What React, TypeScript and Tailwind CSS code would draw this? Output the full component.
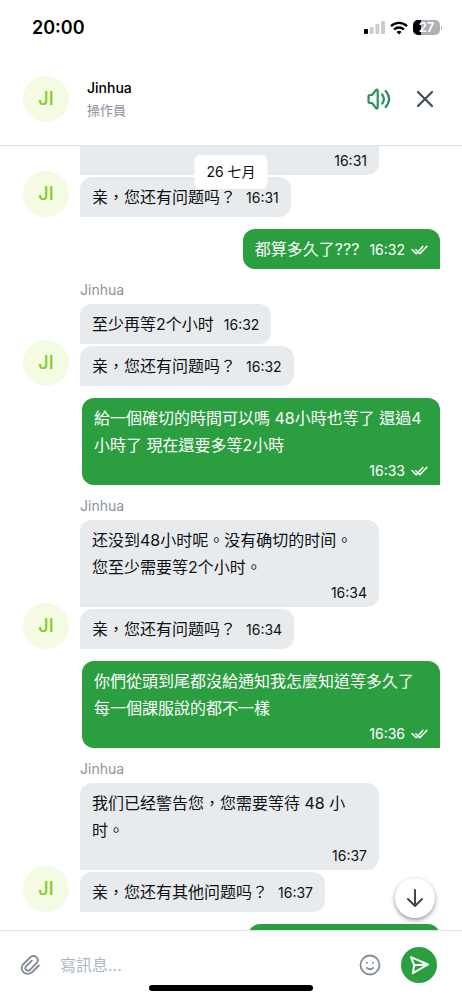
import type { ReactNode } from "react";

type Message = { text: string; time: string; wide?: boolean };

const first: Message[] = [{ text: "亲，您还有问题吗？", time: "16:31" }];

const second: Message[] = [
  { text: "至少再等2个小时", time: "16:32" },
  { text: "亲，您还有问题吗？", time: "16:32" },
];

const third: Message[] = [
  {
    text: "还没到48小时呢。没有确切的时间。\n您至少需要等2个小时。",
    time: "16:34",
    wide: true,
  },
  { text: "亲，您还有问题吗？", time: "16:34" },
];

const fourth: Message[] = [
  { text: "我们已经警告您，您需要等待 48 小时。", time: "16:37", wide: true },
  { text: "亲，您还有其他问题吗？", time: "16:37" },
];

function Avatar() {
  return (
    <div className="flex size-[46px] shrink-0 items-center justify-center rounded-full bg-[#f3fbe3] text-lg font-medium text-[#82cb22]">
      JI
    </div>
  );
}

function Ticks() {
  return (
    <svg
      className="h-[10px] w-[17px]"
      viewBox="0 0 17 10"
      fill="none"
      stroke="currentColor"
      strokeWidth="1.5"
      strokeLinecap="round"
      strokeLinejoin="round"
    >
      <path d="M1 4.500l4.200 4.300 1-1M8.200 5.600l3.600-4.200M4.800 4.800L8.800 8.800 15.900 1.200" />
    </svg>
  );
}

function Bubble({ text, time, wide, mine }: Message & { mine?: boolean }) {
  const color = mine
    ? "bg-[#2b9e40] text-white rounded-bl-xl"
    : "bg-[#e7ebee] text-[#111] rounded-br-xl";
  const layout = wide ? "w-full flex-col pb-[2px]" : "items-center gap-[10px] pb-1.5";

  return (
    <div className={`flex rounded-t-xl px-3 pt-[7px] ${color} ${layout}`}>
      <p className="text-base leading-[27px] whitespace-pre-line">{text}</p>
      <div
        className={`flex shrink-0 items-center gap-1.5 text-sm ${
          wide ? "h-6 self-end" : ""
        }`}
      >
        <time>{time}</time>
        {mine && <Ticks />}
      </div>
    </div>
  );
}

function Incoming({
  name,
  messages,
  children,
}: {
  name?: string;
  messages: Message[];
  children?: ReactNode;
}) {
  return (
    <div className="flex items-end gap-[11px] pr-[83px] pl-[23px]">
      <Avatar />
      <div className="flex min-w-0 flex-1 flex-col items-start gap-0.5">
        {name && (
          <span className="mt-3 mb-[3px] text-sm leading-[18px] text-[#8a949e]">
            {name}
          </span>
        )}
        {children}
        {messages.map((m, i) => (
          <Bubble key={i} {...m} />
        ))}
      </div>
    </div>
  );
}

function Outgoing(props: Message) {
  return (
    <div className="mt-3 flex justify-end pr-[22px] pl-[82px]">
      <Bubble {...props} mine />
    </div>
  );
}

function StatusBar() {
  return (
    <div className="flex h-[54px] items-center justify-between pt-px pr-5 pl-8">
      <span className="text-lg font-semibold text-black">20:00</span>
      <div className="flex items-center gap-[5px]">
        <svg className="h-[13px] w-[21px]" viewBox="0 0 21 13">
          <rect x="0" y="8" width="4" height="5" rx="1" fill="#000" />
          <rect x="5.700" y="6" width="4" height="7" rx="1" fill="#ccc" />
          <rect x="11.400" y="3" width="4" height="10" rx="1" fill="#ccc" />
          <rect x="17" y="0" width="4" height="13" rx="1" fill="#ccc" />
        </svg>
        <svg
          className="h-[14px] w-[18px]"
          viewBox="0 0 18 14"
          fill="none"
          stroke="#000"
          strokeWidth="2.300"
        >
          <path d="M1 5.200a11.500 11.500 0 0 1 16 0" />
          <path d="M4 8.500a7.200 7.200 0 0 1 10 0" />
          <path d="M9 13.500l-2.500-2.600a3.600 3.600 0 0 1 5 0z" fill="#000" stroke="none" />
        </svg>
        <div className="flex items-center gap-px">
          <div className="flex h-[15px] w-[27px] items-center justify-center rounded-[5px] bg-linear-to-r from-black from-30% to-[#b0b0b0] to-30% text-[13px] font-semibold text-white">
            27
          </div>
          <span className="h-1 w-px rounded-r bg-[#b0b0b0]" />
        </div>
      </div>
    </div>
  );
}

function Header() {
  return (
    <header className="border-b border-[#dfe3e6]">
      <StatusBar />
      <div className="flex items-center pt-[22px] pr-7 pb-[23px] pl-[23px]">
        <Avatar />
        <div className="ml-[18px] flex-1">
          <h1 className="text-sm leading-5 font-medium text-black">Jinhua</h1>
          <p className="mt-0.5 text-[13px] leading-5 text-[#87919b]">操作員</p>
        </div>
        <button aria-label="聲音" className="mr-[25px] text-[#25925f]">
          <svg
            className="size-6"
            viewBox="0 0 24 24"
            fill="none"
            stroke="currentColor"
            strokeWidth="2.200"
            strokeLinecap="round"
            strokeLinejoin="round"
          >
            <path d="M5 8l3.700-4.600Q10.700 1.400 10.700 4v16Q10.700 22.600 8.700 20.600L5 16H3.200q-1.700 0-1.700-1.700V9.700Q1.500 8 3.200 8z" />
            <path d="M15.200 7.500q3.400 4.500 0 9M18.600 4q7 8 0 16" />
          </svg>
        </button>
        <button aria-label="關閉" className="text-[#454d57]">
          <svg
            className="size-[18px]"
            viewBox="0 0 18 18"
            stroke="currentColor"
            strokeWidth="2.200"
            strokeLinecap="round"
          >
            <path d="M2 2l14 14M16 2L2 16" />
          </svg>
        </button>
      </div>
    </header>
  );
}

function Composer() {
  return (
    <footer className="border-t border-[#dfe5ea] pt-4 pb-[9px]">
      <form className="flex h-9 items-center pr-[25px] pl-5">
        <button type="button" aria-label="附件" className="text-[#828d98]">
          <svg
            className="size-[22px]"
            viewBox="0 0 22 22"
            fill="none"
            stroke="currentColor"
            strokeWidth="1.900"
            strokeLinecap="round"
            strokeLinejoin="round"
          >
            <path d="M18.800 11.500l-6.500 6.500c-5.500 5.200-14-1.500-9.300-7.500l7-7c4-3.700 10 .800 7 5l-7 7.300c-2.600 2.300-6-.700-4-3.300l5.800-5.800" />
          </svg>
        </button>
        <input
          aria-label="寫訊息"
          placeholder="寫訊息..."
          className="ml-[18px] min-w-0 flex-1 text-base outline-none placeholder:text-[#aeb7c1]"
        />
        <button type="button" aria-label="表情" className="mr-5 text-[#828d98]">
          <svg
            className="size-[22px]"
            viewBox="0 0 22 22"
            fill="none"
            stroke="currentColor"
            strokeWidth="1.800"
            strokeLinecap="round"
          >
            <circle cx="11" cy="11" r="9.500" />
            <path d="M7.800 13.900q3.200 2.800 6.400 0" />
            <path d="M8 9v.1M14 9v.1" strokeWidth="2" />
          </svg>
        </button>
        <button
          aria-label="傳送"
          className="flex size-9 items-center justify-center rounded-full bg-[#2b9e40] text-white"
        >
          <svg
            className="size-5"
            viewBox="0 0 20 20"
            fill="none"
            stroke="currentColor"
            strokeWidth="2"
            strokeLinejoin="round"
          >
            <path d="M2 2.200L19 9.500 3.800 18.200 5.200 10.200zM5.200 10.200L19 9.500" />
          </svg>
        </button>
      </form>
      <div className="mx-auto mt-0.5 h-1.5 w-[164px] rounded-full bg-black" />
    </footer>
  );
}

export default function App() {
  return (
    <div
      lang="zh-Hant"
      className="flex h-screen flex-col bg-white font-['Inter','Noto_Sans_CJK_TC',sans-serif] text-[#111]"
    >
      <Header />

      <main className="relative min-h-0 flex-1">
        <div className="h-full overflow-y-auto [scrollbar-width:none]">
          <Incoming messages={first}>
            <div className="flex h-[29px] w-full items-center justify-end rounded-br-xl bg-[#e7ebee] px-3 text-sm">
              <time>16:31</time>
            </div>
          </Incoming>
          <Outgoing text="都算多久了???" time="16:32" />
          <Incoming name="Jinhua" messages={second} />
          <Outgoing
            text="給一個確切的時間可以嗎 48小時也等了 還過4小時了 現在還要多等2小時"
            time="16:33"
            wide
          />
          <Incoming name="Jinhua" messages={third} />
          <Outgoing
            text={"你們從頭到尾都沒給通知我怎麼知道等多久了\n每一個課服說的都不一樣"}
            time="16:36"
            wide
          />
          <Incoming name="Jinhua" messages={fourth} />
          <div className="mt-3 flex justify-end pr-[22px]">
            <div className="h-10 w-48 rounded-t-xl rounded-bl-xl bg-[#2b9e40]" />
          </div>
        </div>

        <div className="absolute top-[9px] left-1/2 -translate-x-1/2 rounded-md bg-white px-3 py-[7px] text-sm leading-5 whitespace-nowrap">
          26 七月
        </div>
        <button
          aria-label="捲到底部"
          className="absolute right-[27px] bottom-3 flex size-10 items-center justify-center rounded-full bg-white text-[#3f4850] shadow-[0_2px_4px_rgba(40,40,80,0.5)]"
        >
          <svg
            className="size-5"
            viewBox="0 0 20 20"
            fill="none"
            stroke="currentColor"
            strokeWidth="2"
            strokeLinecap="round"
            strokeLinejoin="round"
          >
            <path d="M10 2v16M3 11l7 7 7-7" />
          </svg>
        </button>
      </main>

      <Composer />
    </div>
  );
}
